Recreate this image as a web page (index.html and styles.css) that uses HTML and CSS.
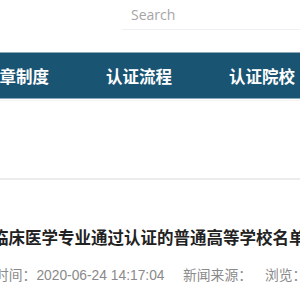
FILE: index.html
```html
<!DOCTYPE html>
<html lang="zh-CN">
<head>
    <meta charset="UTF-8">
    <meta name="viewport" content="width=device-width, initial-scale=1.0">
    <title>认证院校</title>
    <link rel="stylesheet" href="styles.css">
</head>
<body>

    <div id="header">
        <div id="search">Search</div>
    </div>

    <div id="nav">
        <a href="#">规章制度</a>
        <a href="#">认证流程</a>
        <a href="#">认证院校</a>
    </div>

    <div id="banner"></div>

    <div id="article">
        <h1>临床医学专业通过认证的普通高等学校名单</h1>
        <div class="meta">
            <span>时间：2020-06-24 14:17:04</span>
            <span>新闻来源：</span>
            <span>浏览：</span>
        </div>
    </div>

</body>
</html>
```

FILE: styles.css
```css
/* General */
* {
    margin: 0;
    padding: 0;
    box-sizing: border-box;
}
html, body {
    width: 100%;
    height: 100%;
    overflow: hidden;
    background: #fff;
    font-family: "Liberation Sans", "Noto Sans CJK SC", sans-serif;
}
/* Header */
#header {
    height: 52px;
    padding-left: 122px;
}
#search {
    height: 30px;
    padding: 5px 0 0 9px;
    border-bottom: 1px solid #eef0f3;
    color: #a5a5a5;
    font-family: "Open Sans", sans-serif;
    font-size: 14px;
}
/* Nav */
#nav {
    height: 47px;
    display: flex;
    align-items: center;
    gap: 57px;
    margin-left: -17px;
    background: #1a5473;
    border-top: 1px solid #8aa8b8;
    border-bottom: 1px solid #8aa8b8;
}
#nav a {
    flex-shrink: 0;
    color: #fff;
    text-decoration: none;
    font-family: "Noto Sans CJK SC", sans-serif;
    font-weight: bold;
    font-size: 16.5px;
}
/* Banner */
#banner {
    height: 80px;
    margin-top: 1px;
    border-top: 1px solid #f4f4f4;
    border-bottom: 2px solid #ececec;
}
/* Article */
#article {
    padding-top: 45px;
    margin-left: -8px;
}
#article h1 {
    font-family: "Noto Sans CJK SC", sans-serif;
    font-size: 16.5px;
    font-weight: bold;
    color: #222;
    white-space: nowrap;
    line-height: 24px;
}
.meta {
    display: flex;
    margin-top: 15px;
    margin-left: 3px;
    font-size: 13.8px;
    color: #8a8a8a;
    white-space: nowrap;
}
.meta span {
    flex-shrink: 0;
}
.meta span:nth-child(1) {
    width: 188px;
}
.meta span:nth-child(2) {
    width: 82px;
}
```
